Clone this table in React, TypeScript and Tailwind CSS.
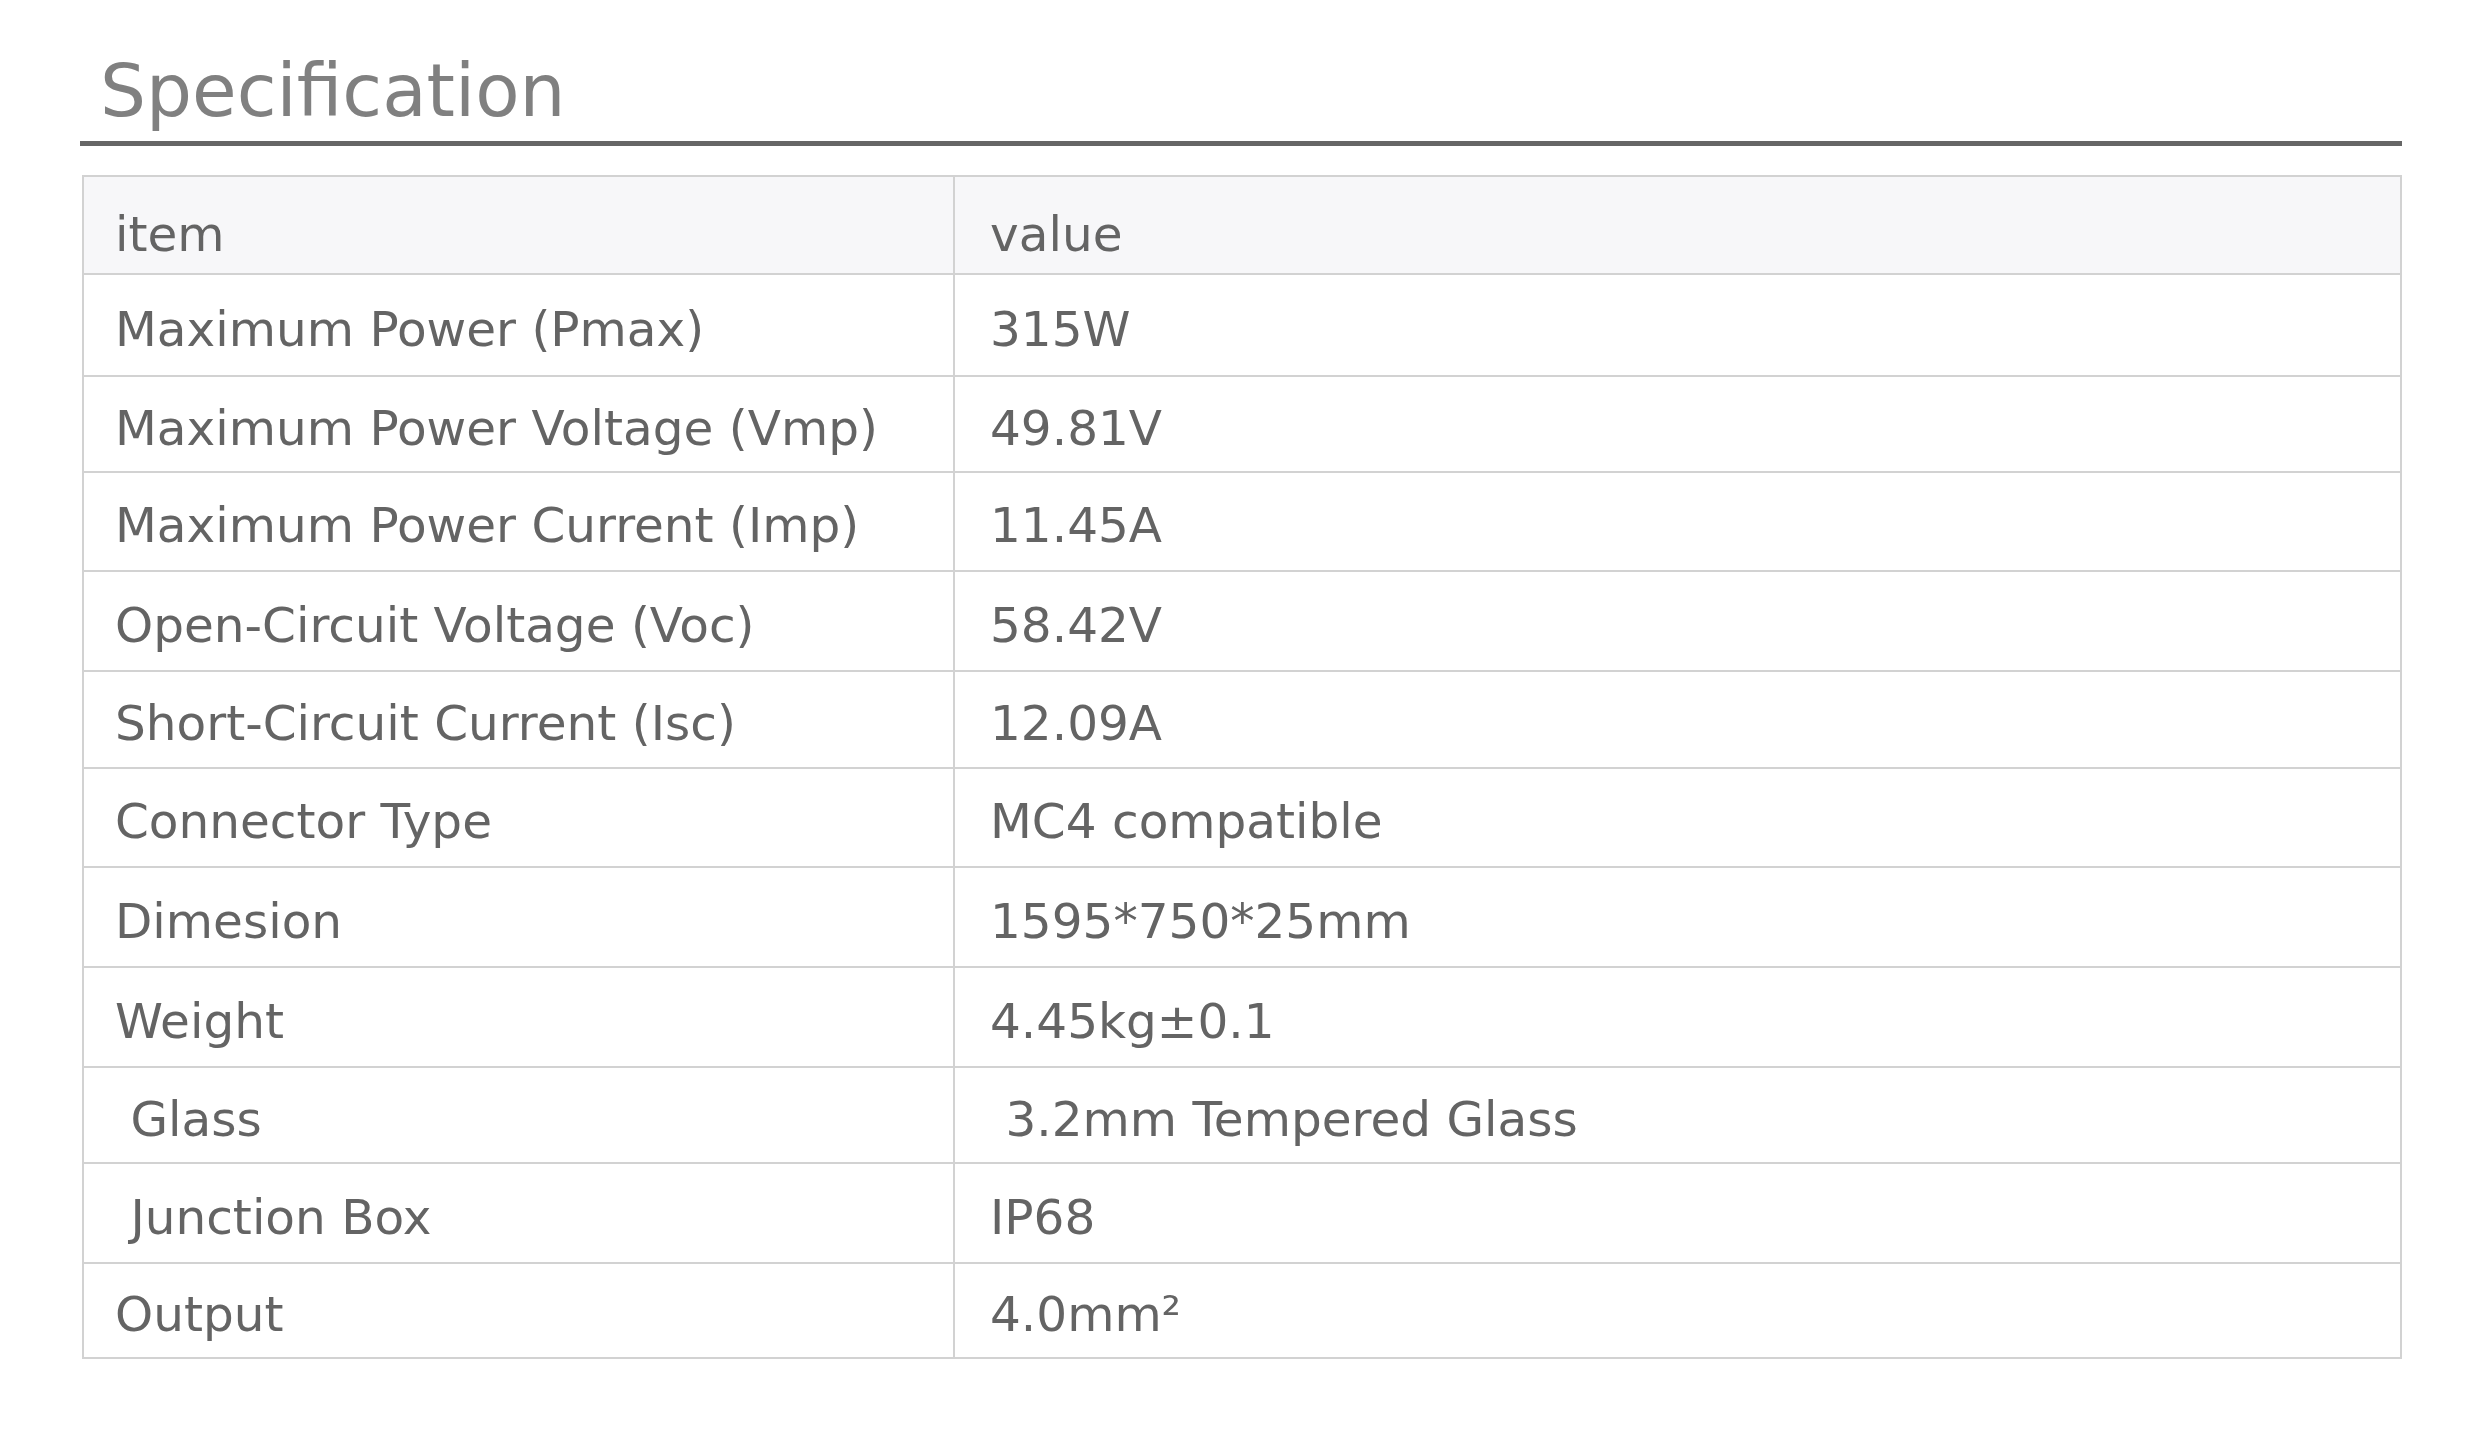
import React from "react";

const rows: [string, string, string][] = [
  ["Maximum Power (Pmax)", "315W", "h-[102px]"],
  ["Maximum Power Voltage (Vmp)", "49.81V", "h-[96px]"],
  ["Maximum Power Current (Imp)", "11.45A", "h-[99px]"],
  ["Open-Circuit Voltage (Voc)", "58.42V", "h-[100px]"],
  ["Short-Circuit Current (Isc)", "12.09A", "h-[97px]"],
  ["Connector Type", "MC4 compatible", "h-[99px]"],
  ["Dimesion", "1595*750*25mm", "h-[100px]"],
  ["Weight", "4.45kg±0.1", "h-[100px]"],
  [" Glass", " 3.2mm Tempered Glass", "h-[96px]"],
  [" Junction Box", "IP68", "h-[100px]"],
  ["Output", "4.0mm²", "h-[95px]"],
];

export default function App() {
  return (
    <div
      className="min-h-screen w-full bg-white"
      style={{ fontFamily: '"DejaVu Sans", "Liberation Sans", sans-serif' }}
    >
      <div className="pl-[80px] pr-[78px] pt-[55px]">
        <h2 className="pl-[20px] text-[72.5px] leading-none font-normal text-[#808080] h-[72px]">
          Specification
        </h2>
        <div className="mt-[14px] h-[5px] bg-[#666666]" />
        <table className="mt-[29px] ml-[2px] w-[2320px] border-collapse border-2 border-[#d2d2d2] text-[48.5px] leading-none text-[#646464]">
          <thead>
            <tr className="h-[98px] bg-[#f7f7f9]">
              <th className="w-[871px] border-2 border-[#d2d2d2] pl-[31px] pt-[18px] text-left font-normal align-middle">
                item
              </th>
              <th className="border-2 border-[#d2d2d2] pl-[35px] pt-[18px] text-left font-normal align-middle">
                value
              </th>
            </tr>
          </thead>
          <tbody>
            {rows.map(([k, v, h]) => (
              <tr key={k} className={h}>
                <td className="border-2 border-[#d2d2d2] pl-[31px] pt-[8px] align-middle whitespace-pre">
                  {k}
                </td>
                <td className="border-2 border-[#d2d2d2] pl-[35px] pt-[8px] align-middle whitespace-pre">
                  {v}
                </td>
              </tr>
            ))}
          </tbody>
        </table>
      </div>
    </div>
  );
}
